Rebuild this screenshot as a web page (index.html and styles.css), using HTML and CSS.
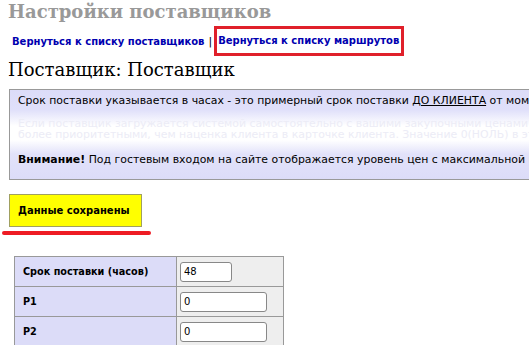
FILE: index.html
```html
<!DOCTYPE html>
<html lang="ru">
<head>
<meta charset="utf-8">
<title>Настройки поставщиков</title>
<link rel="stylesheet" href="styles.css">
</head>
<body>
<h1 class="title">Настройки поставщиков</h1>
<div class="nav">
  <a class="nav-link" href="#">Вернуться к списку поставщиков</a>
  <span class="sep">|</span>
  <span class="hl"><a class="nav-link" href="#">Вернуться к списку маршрутов</a></span>
</div>
<h2 class="supplier">Поставщик: Поставщик</h2>
<div class="info">
  <p class="info-line">Срок поставки указывается в часах - это примерный срок поставки <u>ДО КЛИЕНТА</u> от момента оформления заказа</p>
  <p class="info-faded">Если поставщик загружается системой самостоятельно с вашими закупочными ценами (при наличии), то эти наценки являются<br>более приоритетными, чем наценка клиента в карточке клиента. Значение 0(НОЛЬ) в этом поле означает отсутствие наценки</p>
  <p class="info-line"><b>Внимание!</b> Под гостевым входом на сайте отображается уровень цен с максимальной наценкой</p>
</div>
<div class="saved-wrap">
  <div class="saved">Данные сохранены</div>
  <div class="mark"></div>
</div>
<table class="params">
  <tr><th class="lbl">Срок поставки (часов)</th><td class="val"><input class="inp inp-short" type="text" value="48"></td></tr>
  <tr><th class="lbl">P1</th><td class="val"><input class="inp" type="text" value="0"></td></tr>
  <tr><th class="lbl">P2</th><td class="val"><input class="inp" type="text" value="0"></td></tr>
</table>
</body>
</html>
```
FILE: styles.css
```css
html, body {
  margin: 0;
  padding: 0;
  background: #fff;
  overflow: hidden;
}
body {
  padding: 0 0 0 8px;
  font-family: "DejaVu Sans", sans-serif;
  font-size: 10px;
  color: #000;
}
.title {
  margin: 0;
  font-family: "DejaVu Serif", serif;
  font-weight: bold;
  font-size: 18px;
  line-height: 24px;
  color: #999;
  white-space: nowrap;
}
.nav {
  display: flex;
  align-items: center;
  margin-top: 3px;
  padding-left: 4px;
  height: 28px;
  white-space: nowrap;
}
.nav-link {
  font-weight: bold;
  font-size: 10px;
  color: #0000b0;
  text-decoration: none;
}
.sep {
  margin: 0 2px 0 4px;
  font-size: 11px;
}
.hl {
  border: 3px solid #e0202a;
  padding: 6px 2px 7px 1px;
}
.supplier {
  margin: 3px 0 0 0;
  font-family: "DejaVu Serif", serif;
  font-weight: normal;
  font-size: 18px;
  line-height: 24px;
  white-space: nowrap;
}
.info {
  margin-top: 7px;
  margin-left: 1px;
  width: 600px;
  border: 1px solid #999;
  border-right: none;
  height: 91px;
  box-sizing: border-box;
  padding: 4px 0 0 8px;
  white-space: nowrap;
  font-size: 10.9px;
  background: linear-gradient(to bottom, #dcdcf8 0, #e0e0fa 20px, #ffffff 36px, #ffffff 50px, #e2e2fa 64px, #dcdcf8 100%);
}
.info p { margin: 0; }
.info-line { line-height: 14px; }
.info-faded {
  margin-top: 10px !important;
  margin-bottom: 13px !important;
  line-height: 11px;
  color: #ececf6;
}
.saved-wrap {
  margin-top: 14px;
  width: 150px;
}
.saved {
  margin-left: 1px;
  width: 133px;
  height: 33px;
  box-sizing: border-box;
  border: 1px solid #a0a060;
  background: #ffff00;
  font-weight: bold;
  font-size: 10px;
  line-height: 31px;
  padding-left: 8px;
}
.mark {
  margin: 4px 0 0 -6px;
  width: 149px;
  height: 4px;
  border-radius: 2px;
  background: #ee1c24;
}
.params {
  margin: 21px 0 0 6px;
  border-collapse: collapse;
}
.params th, .params td {
  border: 1px solid #999;
  height: 29px;
  padding: 0 4px;
}
.lbl {
  width: 149px;
  background: #dcdcf8;
  text-align: left;
  font-weight: bold;
  font-size: 9.7px;
  padding-left: 8px !important;
}
.params .val {
  width: 98px;
  padding: 0 5px 0 3px;
  background: #eeeeee;
}
.inp {
  display: block;
  width: 87px;
  height: 20px;
  box-sizing: border-box;
  border: 1px solid #888;
  border-radius: 3px;
  padding: 0 3px;
  font-family: "DejaVu Sans", sans-serif;
  font-size: 10px;
  background: #fff;
}
.inp-short { width: 52px; }
```
